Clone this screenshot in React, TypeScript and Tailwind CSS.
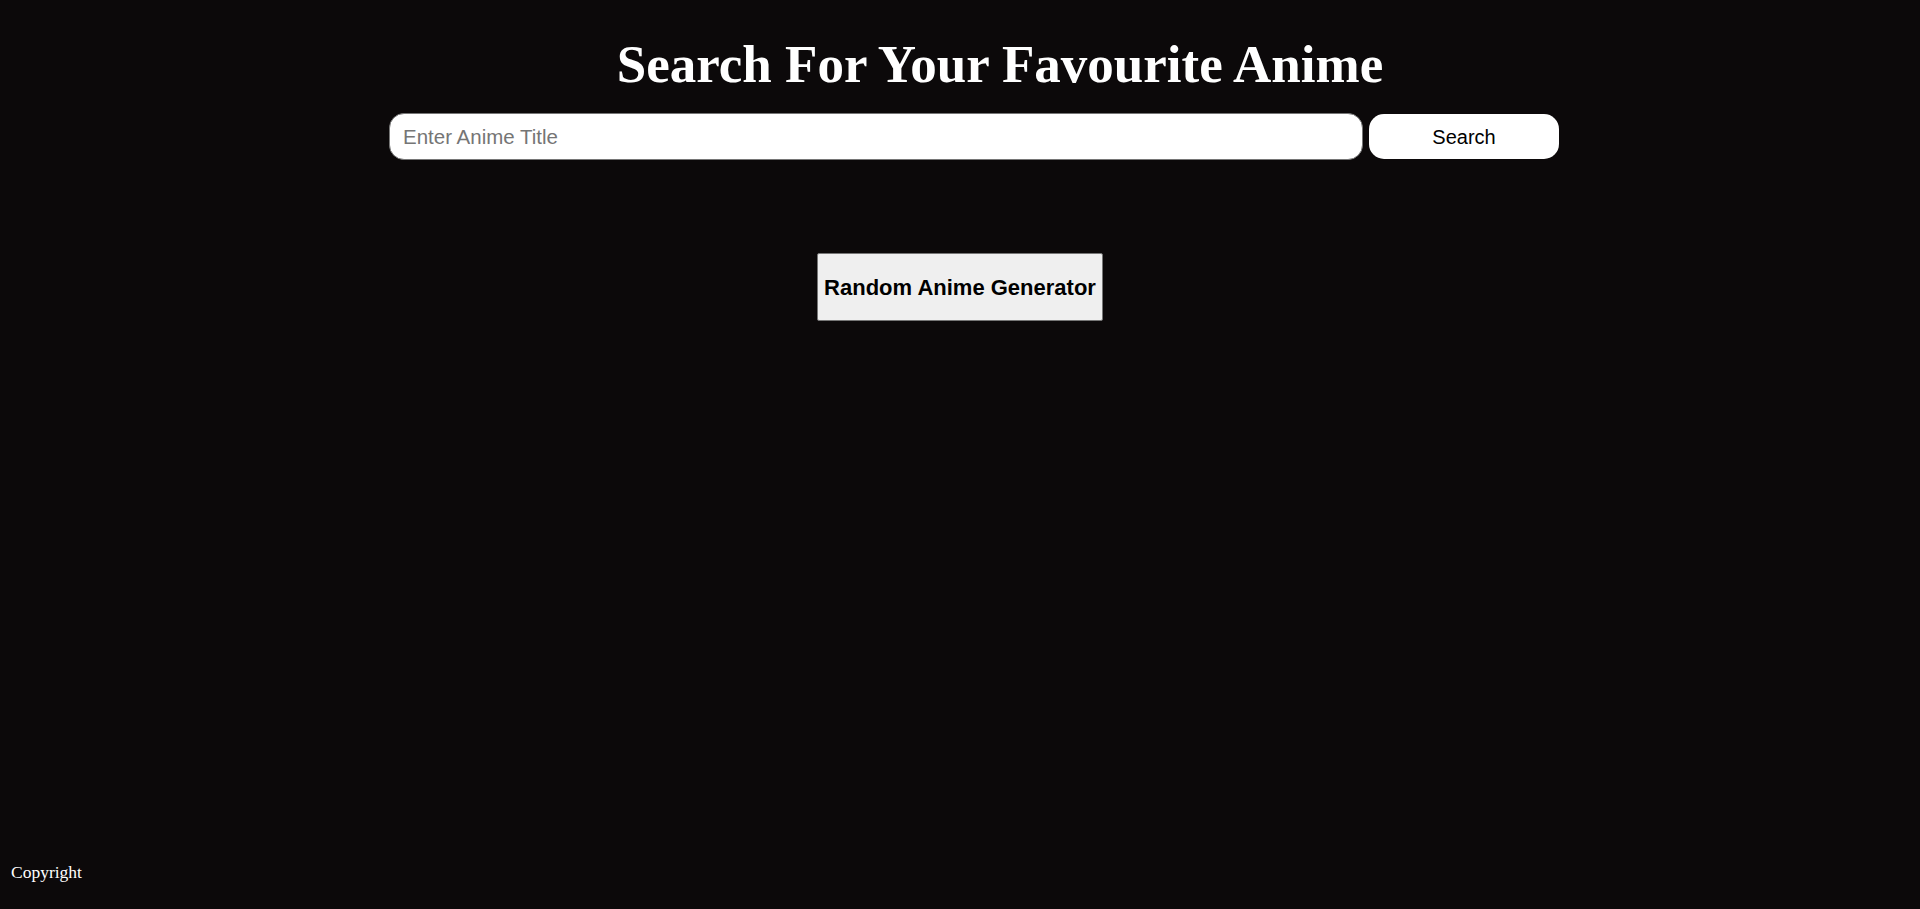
export default function App() {
  return (
    <div className="min-h-[909px] w-full bg-[#0c090a] flex flex-col relative">
      <h1
        className="text-white font-bold text-[53px] leading-none text-center pl-[80px] mt-[38px]"
        style={{ fontFamily: '"Liberation Serif", "Times New Roman", serif' }}
      >
        Search For Your Favourite Anime
      </h1>
      <div className="flex justify-center pl-[28px] mt-[22px]" style={{ fontFamily: '"Liberation Sans", Arial, sans-serif' }}>
        <input
          type="text"
          placeholder="Enter Anime Title"
          className="w-[974px] h-[47px] bg-white rounded-[15px] pl-[13px] text-[20.5px] text-black placeholder:text-[#757575] outline-none border border-[#767676]"
        />
        <button className="ml-[6px] w-[190px] h-[45px] mt-[1px] bg-white rounded-[15px] text-[20px] text-black">
          Search
        </button>
      </div>
      <div className="flex justify-center mt-[93px]" style={{ fontFamily: '"Liberation Sans", Arial, sans-serif' }}>
        <button className="w-[286px] h-[68px] bg-[#efefef] border border-[#767676] rounded-[2px] text-[22px] font-bold text-black">
          Random Anime Generator
        </button>
      </div>
      <div className="flex-1" />
      <p
        className="text-white text-[17.5px] pl-[11px] pb-[24px]"
        style={{ fontFamily: '"Liberation Serif", "Times New Roman", serif' }}
      >
        Copyright
      </p>
    </div>
  );
}
